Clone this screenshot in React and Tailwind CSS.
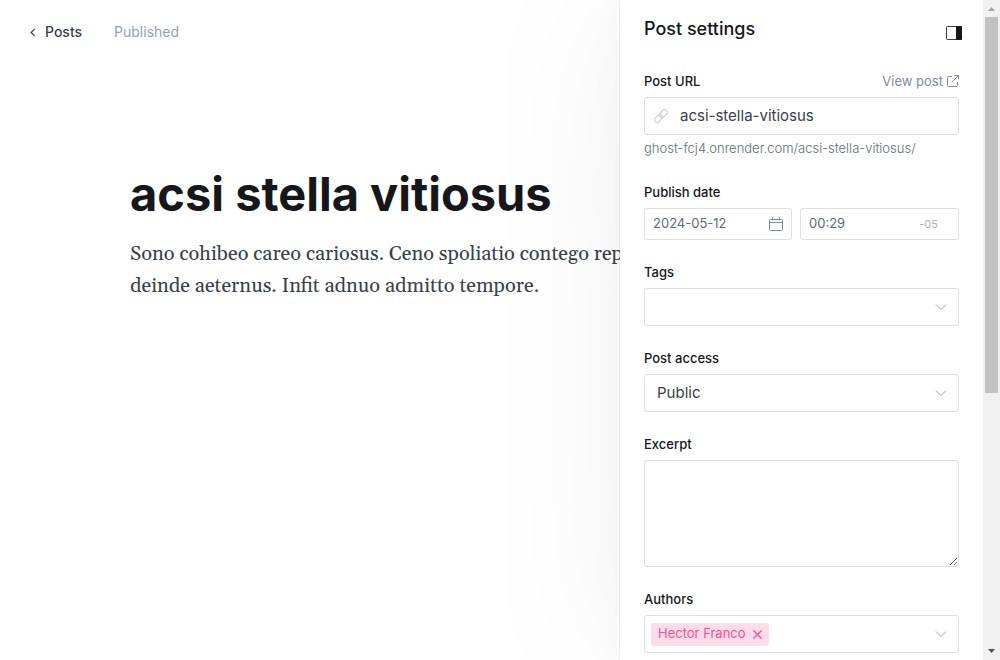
import React from "react";

const fieldBox = "rounded-[3px] border border-[#dddfe1] bg-white outline-none";

function Chevron() {
  return (
    <svg className="pointer-events-none h-3 w-3 shrink-0 text-[#9aa5b1]" viewBox="0 0 12 12" fill="none" stroke="currentColor" aria-hidden="true">
      <path d="M1 3.5 6 8.5 11 3.5" />
    </svg>
  );
}

function Field({ id, label, action, children }) {
  return (
    <div>
      <div className="mb-1 flex h-6 items-center justify-between text-[13px] leading-4">
        <label htmlFor={id} className="font-medium text-[#15171a]">{label}</label>
        {action}
      </div>
      {children}
    </div>
  );
}

function ScrollTrack() {
  return (
    <div className="flex w-[17px] shrink-0 flex-col items-center bg-[#f0f0f0]" aria-hidden="true">
      <svg className="h-[17px] w-[17px] shrink-0" viewBox="0 0 17 17"><path d="M5 11h7L8.5 7z" fill="#a3a3a3" /></svg>
      <div className="flex w-full flex-1 flex-col px-[2px]">
        <div className="basis-[60%] bg-[#c1c1c1]" />
      </div>
      <svg className="h-[17px] w-[17px] shrink-0" viewBox="0 0 17 17"><path d="M5 6h7l-3.500 4z" fill="#505050" /></svg>
    </div>
  );
}

export default function App() {
  return (
    <div className="flex h-screen overflow-hidden bg-white font-['Inter',sans-serif] text-[#15171a]">
      <main className="min-w-0 flex-1 overflow-hidden">
        <header className="flex h-[62px] items-center gap-8 pl-7 text-[14px]">
          <a href="#posts" className="flex items-center gap-2 font-medium text-[#394047]">
            <svg className="mt-[2px] h-[9px] w-[9px]" viewBox="0 0 8 8" fill="none" stroke="currentColor" strokeWidth="1.100" aria-hidden="true">
              <path d="M6 .8 2.800 4 6 7.200" />
            </svg>
            Posts
          </a>
          <span className="text-[#95a1ad]">Published</span>
        </header>
        <article className="pl-[130px] pt-[104px]">
          <h1 className="whitespace-nowrap text-[47px] font-bold leading-[56px]">acsi stella vitiosus</h1>
          <p className="whitespace-nowrap pt-4 font-['Georgia','Gelasio','Liberation_Serif',serif] text-[20px] leading-8 text-[#394047]">
            Sono cohibeo careo cariosus. Ceno spoliatio contego rep
            <br />
            deinde aeternus. Infit adnuo admitto tempore.
          </p>
        </article>
      </main>

      <aside className="relative z-10 flex w-[380px] shrink-0 bg-white shadow-[0_0_1px_rgba(0,0,0,0.25),0_0_36px_rgba(0,0,0,0.03),0_0_170px_rgba(0,0,0,0.06)]">
        <form className="min-w-0 flex-1 overflow-hidden px-6">
          <div className="flex h-[69px] items-start justify-between pt-[17px]">
            <h2 className="text-[18px] font-medium leading-6">Post settings</h2>
            <button type="button" aria-label="Toggle settings" className="-mr-1 mt-[7px]">
              <svg className="h-[18px] w-[18px]" viewBox="0 0 18 18" fill="none" aria-hidden="true">
                <rect x="1.500" y="2.500" width="15" height="13" rx=".8" stroke="#394047" />
                <path d="M11 2h5q1 0 1 1v12q0 1-1 1h-5z" fill="#15171a" />
              </svg>
            </button>
          </div>

          <div className="flex flex-col gap-5">
            <Field
              id="url"
              label="Post URL"
              action={
                <a href="#view" className="flex items-center gap-1 text-[#7c8b9a]">
                  View post
                  <svg className="h-3 w-3" viewBox="0 0 12 12" fill="none" stroke="currentColor" aria-hidden="true">
                    <path d="M5 1.500H1.500Q.5 1.500.5 2.500v8q0 1 1 1h8q1 0 1-1V7M7.500.5h4v4M11.500.5 5 7" />
                  </svg>
                </a>
              }
            >
              <div className={`${fieldBox} flex h-[38px] items-center gap-3 pl-[9px]`}>
                <svg className="h-[14px] w-[14px] shrink-0 text-[#c5cbd1]" viewBox="0 0 24 24" fill="none" stroke="currentColor" strokeWidth="1.700" aria-hidden="true">
                  <g transform="rotate(-45 12 12)">
                    <rect x="-1.500" y="7.500" width="15" height="9" rx="4.500" />
                    <rect x="10.500" y="7.500" width="15" height="9" rx="4.500" />
                  </g>
                </svg>
                <input id="url" className="min-w-0 flex-1 bg-transparent text-[15px] text-[#394047] outline-none" defaultValue="acsi-stella-vitiosus" />
              </div>
              <p className="pb-[2px] pt-[3px] text-[13px] font-light leading-5 text-[#626d79]">ghost-fcj4.onrender.com/acsi-stella-vitiosus/</p>
            </Field>

            <Field id="date" label="Publish date">
              <div className="flex gap-2">
                <div className={`${fieldBox} flex h-8 w-[148px] shrink-0 items-center px-2`}>
                  <input id="date" className="min-w-0 flex-1 bg-transparent text-[13px] text-[#5d6a76] outline-none" defaultValue="2024-05-12" />
                  <svg className="h-[14px] w-[14px] text-[#7c8b9a]" viewBox="0 0 14 14" fill="none" stroke="currentColor" aria-hidden="true">
                    <path d="M1.500 2.500h11q1 0 1 1v9q0 1-1 1h-11q-1 0-1-1v-9q0-1 1-1zM.5 5.500h13M3.500.5v3M10.500.5v3" />
                  </svg>
                </div>
                <div className={`${fieldBox} flex h-8 min-w-0 flex-1 items-center pl-2 pr-5`}>
                  <input aria-label="Publish time" className="min-w-0 flex-1 bg-transparent text-[13px] text-[#5d6a76] outline-none" defaultValue="00:29" />
                  <span className="text-[11px] text-[#abb4be]">-05</span>
                </div>
              </div>
            </Field>

            <Field id="tags" label="Tags">
              <div className={`${fieldBox} flex h-[38px] items-center pl-3 pr-[11px]`}>
                <input id="tags" className="min-w-0 flex-1 bg-transparent outline-none" />
                <Chevron />
              </div>
            </Field>

            <Field id="access" label="Post access">
              <div className={`${fieldBox} flex h-[38px] items-center pl-3 pr-[11px]`}>
                <select id="access" className="h-full min-w-0 flex-1 appearance-none bg-transparent text-[15px] text-[#394047] outline-none">
                  <option>Public</option>
                </select>
                <Chevron />
              </div>
            </Field>

            <Field id="excerpt" label="Excerpt">
              <textarea id="excerpt" className={`${fieldBox} block h-[107px] w-full resize-y p-3`} />
            </Field>

            <Field id="authors" label="Authors">
              <div className={`${fieldBox} flex h-[38px] items-center pl-[6px] pr-[11px]`}>
                <span className="flex h-[23px] items-center gap-[7px] rounded-[3px] bg-[#ffdcea] px-[7px] text-[13px] text-[#fb4f93]">
                  Hector Franco
                  <button type="button" aria-label="Remove Hector Franco">
                    <svg className="h-[9px] w-[9px]" viewBox="0 0 8 8" stroke="currentColor" strokeWidth="1.200" aria-hidden="true">
                      <path d="M.4.4l7.200 7.200M7.600.4.4 7.600" />
                    </svg>
                  </button>
                </span>
                <input id="authors" className="min-w-0 flex-1 bg-transparent outline-none" />
                <Chevron />
              </div>
            </Field>
          </div>
        </form>
        <ScrollTrack />
      </aside>
    </div>
  );
}
